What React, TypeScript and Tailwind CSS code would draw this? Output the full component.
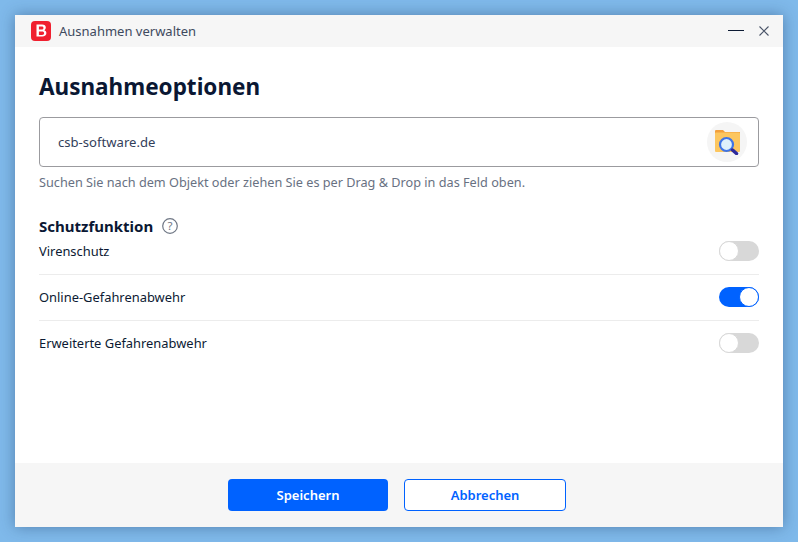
function Toggle({ on }: { on?: boolean }) {
  return (
    <div
      className={`mb-[2px] flex h-5 w-10 items-center rounded-full ${
        on ? "justify-end bg-[#0062ff]" : "justify-start bg-[#d8d8d8]"
      }`}
    >
      <div className={`h-5 w-5 rounded-full border bg-white ${on ? "border-[#0062ff]" : "border-[#d8d8d8]"}`} />
    </div>
  );
}

function Row({ label, on, last }: { label: string; on?: boolean; last?: boolean }) {
  return (
    <div className={`flex h-[46px] items-center justify-between ${last ? "" : "border-b border-[#ececec]"}`}>
      <span className="text-[12.900px] text-[#0c1a33]">{label}</span>
      <Toggle on={on} />
    </div>
  );
}

export default function App() {
  return (
    <div
      className="h-[542px] w-[798px] overflow-hidden bg-[#7fb9ea] p-[15px] text-[#0c1a33]"
      style={{ fontFamily: '"Noto Sans", "Open Sans", sans-serif' }}
    >
      <div className="flex h-[512px] w-[768px] flex-col bg-white shadow-[0_0_14px_rgba(30,60,100,0.45)]">
        <div className="flex h-8 items-center bg-[#f6f6f6] pl-4">
          <svg width="20" height="20" viewBox="0 0 20 20" className="shrink-0">
            <rect width="20" height="20" rx="4" fill="#f0202f" />
            <path
              fillRule="evenodd"
              fill="#fff"
              d="M5.500 3.500h5.600c2.400 0 3.700 1.200 3.700 3.100 0 1.200-.6 2.100-1.500 2.600 1.300.4 2.100 1.500 2.100 2.900 0 2.200-1.600 3.500-4.200 3.500H5.500V3.500zm2.400 2.100v3h2.900c1.100 0 1.700-.6 1.700-1.500s-.6-1.500-1.700-1.500H7.900zm0 5v3.300h3.200c1.300 0 2-.6 2-1.650s-.7-1.650-2-1.650H7.900z"
            />
          </svg>
          <span className="ml-2 pt-[2px] text-[13px] text-[#3e4a5e]">Ausnahmen verwalten</span>
          <div className="ml-auto flex items-center">
            <svg width="16" height="2" viewBox="0 0 16 2">
              <rect width="16" height="1" y="0" fill="#0c1a33" />
            </svg>
            <svg width="10" height="10" viewBox="0 0 10 10" className="ml-[15px] mr-[14px]">
              <path d="M0.500 0.500 9.500 9.500M9.500 0.500 0.500 9.500" stroke="#4a5468" strokeWidth="1.100" fill="none" />
            </svg>
          </div>
        </div>

        <div className="flex-1 px-6">
          <h1 className="mt-[22px] text-[22.500px] font-bold leading-[36px] text-[#0a1733]">Ausnahmeoptionen</h1>
          <div className="mt-[12px] flex h-[50px] items-center justify-between rounded border border-[#9b9b9f] pl-[18px] pr-[11px]">
            <span className="pt-[2px] text-[13.100px] text-[#33405a]">csb-software.de</span>
            <div className="flex h-10 w-10 items-center justify-center rounded-full bg-[#f5f5f5]">
              <svg width="26" height="26" viewBox="0 0 26 26">
                <path d="M1 2a1 1 0 0 1 1-1h7l2 2h15v3H1z" fill="#f2a03d" />
                <rect x="1" y="3.500" width="25" height="19.500" rx="1" fill="#fcc65f" />
                <circle cx="12.500" cy="15.500" r="6.500" fill="#dff0fb" stroke="#3f74e6" strokeWidth="2.200" />
                <path d="M18.500 21 22.500 24.500" stroke="#2d2a9c" strokeWidth="3.500" strokeLinecap="round" />
              </svg>
            </div>
          </div>
          <p className="mt-[6px] text-[12.700px] leading-[18px] text-[#687182]">
            Suchen Sie nach dem Objekt oder ziehen Sie es per Drag &amp; Drop in das Feld oben.
          </p>
          <div className="mt-[25px] flex items-center">
            <span className="text-[15px] font-bold leading-[20px] text-[#0a1733]">Schutzfunktion</span>
            <svg width="16" height="16" viewBox="0 0 16 16" className="ml-[9px]">
              <circle cx="8" cy="8" r="7.300" fill="none" stroke="#6f7785" strokeWidth="1.200" />
              <text x="8" y="12" textAnchor="middle" fontSize="11.500" fill="#6f7785">?</text>
            </svg>
          </div>
          <div className="-mt-[7px]">
            <Row label="Virenschutz" />
            <Row label="Online-Gefahrenabwehr" on />
            <Row label="Erweiterte Gefahrenabwehr" last />
          </div>
        </div>

        <div className="flex h-16 items-center justify-center gap-4 bg-[#f6f6f6] pr-1">
          <button className="h-8 w-40 rounded bg-[#0062ff] pt-[2px] text-[13px] font-semibold text-white">Speichern</button>
          <button className="h-8 w-[162px] rounded border border-[#0062ff] bg-white pt-[2px] text-[13px] font-semibold text-[#0062ff]">
            Abbrechen
          </button>
        </div>
      </div>
    </div>
  );
}
